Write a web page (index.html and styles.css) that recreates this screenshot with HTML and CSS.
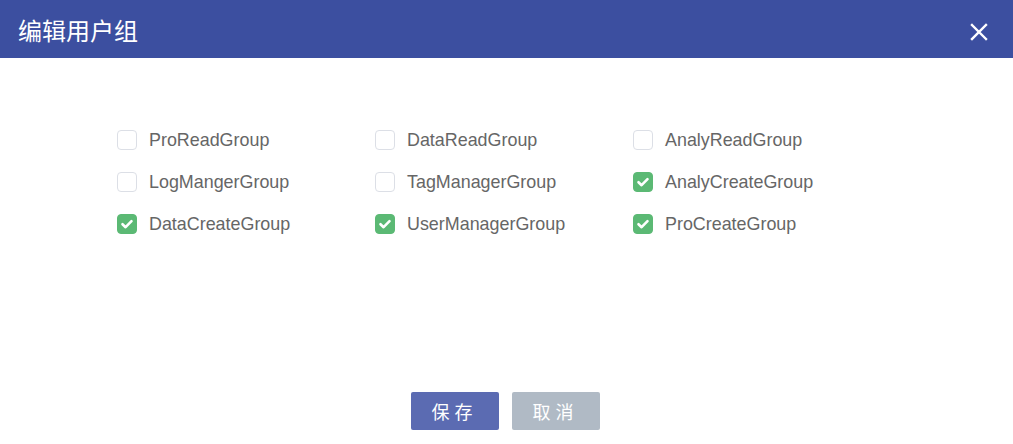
FILE: index.html
```html
<!DOCTYPE html>
<html lang="zh">
<head>
<meta charset="utf-8">
<link rel="stylesheet" href="styles.css">
</head>
<body>
<div class="dialog">
  <header class="dlg-head">
    <h1 class="dlg-title">编辑用户组</h1>
    <button class="dlg-close" aria-label="close">
      <svg width="18" height="18" viewBox="0 0 18 18"><path d="M2 2L16 16M16 2L2 16" stroke="#fff" stroke-width="2.4" stroke-linecap="square"/></svg>
    </button>
  </header>
  <main class="dlg-body">
    <div class="grid">
      <label class="cb"><span class="box"></span><span class="lbl">ProReadGroup</span></label>
      <label class="cb"><span class="box"></span><span class="lbl">DataReadGroup</span></label>
      <label class="cb"><span class="box"></span><span class="lbl">AnalyReadGroup</span></label>
      <label class="cb"><span class="box"></span><span class="lbl">LogMangerGroup</span></label>
      <label class="cb"><span class="box"></span><span class="lbl">TagManagerGroup</span></label>
      <label class="cb on"><span class="box"><svg viewBox="0 0 20 20" width="20" height="20"><path d="M5.5 10.2L8.6 13.2L14.5 7.2" fill="none" stroke="#fff" stroke-width="2.6" stroke-linecap="round" stroke-linejoin="round"/></svg></span><span class="lbl">AnalyCreateGroup</span></label>
      <label class="cb on"><span class="box"><svg viewBox="0 0 20 20" width="20" height="20"><path d="M5.5 10.2L8.6 13.2L14.5 7.2" fill="none" stroke="#fff" stroke-width="2.6" stroke-linecap="round" stroke-linejoin="round"/></svg></span><span class="lbl">DataCreateGroup</span></label>
      <label class="cb on"><span class="box"><svg viewBox="0 0 20 20" width="20" height="20"><path d="M5.5 10.2L8.6 13.2L14.5 7.2" fill="none" stroke="#fff" stroke-width="2.6" stroke-linecap="round" stroke-linejoin="round"/></svg></span><span class="lbl">UserManagerGroup</span></label>
      <label class="cb on"><span class="box"><svg viewBox="0 0 20 20" width="20" height="20"><path d="M5.5 10.2L8.6 13.2L14.5 7.2" fill="none" stroke="#fff" stroke-width="2.6" stroke-linecap="round" stroke-linejoin="round"/></svg></span><span class="lbl">ProCreateGroup</span></label>
    </div>
  </main>
  <footer class="dlg-foot">
    <button class="btn btn-save">保存</button>
    <button class="btn btn-cancel">取消</button>
  </footer>
</div>
</body>
</html>
```
FILE: styles.css
```css
* { box-sizing: border-box; }
html, body { margin: 0; padding: 0; background: #fff; }
body { font-family: "Liberation Sans", "Noto Sans CJK SC", sans-serif; width: 1013px; height: 444px; overflow: hidden; }
.dialog { display: flex; flex-direction: column; height: 444px; }
.dlg-head { height: 58px; background: #3c4fa0; display: flex; align-items: center; justify-content: space-between; padding: 0 25px 0 18px; }
.dlg-title { margin: 0; color: #fff; font-family: "Noto Sans CJK SC", sans-serif; font-weight: 400; font-size: 24px; line-height: 1; padding-top: 2px; }
.dlg-close { background: none; border: 0; padding: 0; width: 18px; height: 18px; display: flex; margin-top: 6px; }
.dlg-body { flex: 1; padding: 72px 0 0 117px; }
.grid { display: grid; grid-template-columns: 258px 258px 258px; row-gap: 22px; }
.cb { display: flex; align-items: center; height: 20px; }
.box { width: 20px; height: 20px; border: 1.5px solid #dcdfe6; border-radius: 4px; background: #fff; display: flex; flex: none; }
.cb.on .box { background: #5bb974; border-color: #5bb974; }
.cb.on .box svg { margin: -1.5px; }
.lbl { margin-left: 12px; font-size: 17.9px; color: #666; }
.dlg-foot { display: flex; justify-content: center; gap: 13px; padding-bottom: 14px; padding-right: 2px; }
.btn { width: 88px; height: 38px; border: 0; border-radius: 2px; color: #fff; font-family: "Noto Sans CJK SC", sans-serif; font-size: 18px; letter-spacing: 5px; padding-left: 5px; }
.btn-save { background: #5b6bb2; }
.btn-cancel { background: #b0bac5; }
```
